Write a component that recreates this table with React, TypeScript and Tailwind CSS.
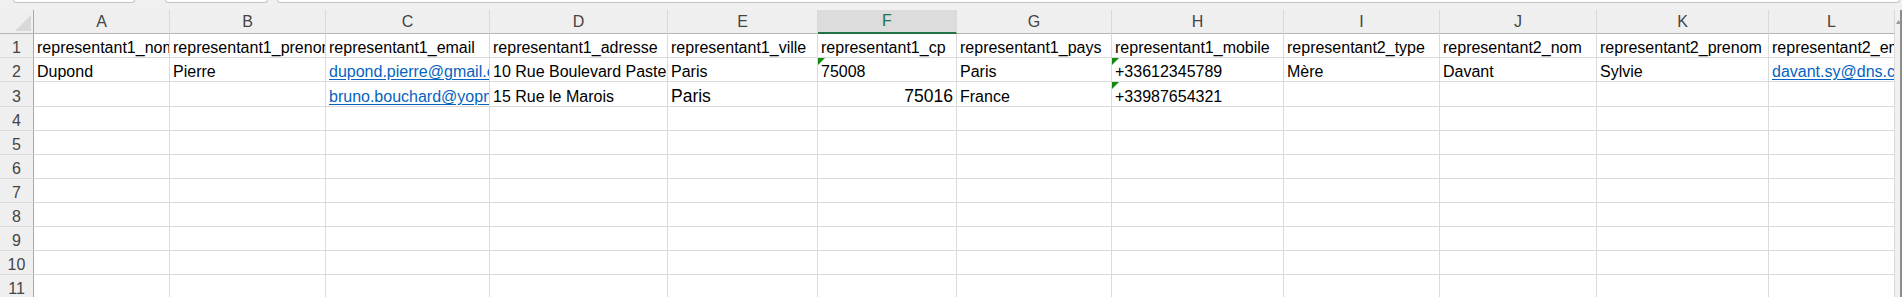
import React from 'react'

type Cell = { v: string; link?: boolean; flag?: boolean; big?: boolean; right?: boolean }

const letters = ['A', 'B', 'C', 'D', 'E', 'F', 'G', 'H', 'I', 'J', 'K', 'L']

const grid =
  'grid grid-cols-[34px_136px_156px_164px_178px_150px_139px_155px_172px_156px_157px_172px_126px]'

const header: Cell[] = [
  'representant1_nom',
  'representant1_prenom',
  'representant1_email',
  'representant1_adresse',
  'representant1_ville',
  'representant1_cp',
  'representant1_pays',
  'representant1_mobile',
  'representant2_type',
  'representant2_nom',
  'representant2_prenom',
  'representant2_email',
].map(v => ({ v }))

const rows: { tall?: boolean; cells: Cell[] }[] = [
  { cells: header },
  {
    cells: [
      { v: 'Dupond' },
      { v: 'Pierre' },
      { v: 'dupond.pierre@gmail.com', link: true },
      { v: '10 Rue Boulevard Pasteur' },
      { v: 'Paris' },
      { v: '75008', flag: true },
      { v: 'Paris' },
      { v: '+33612345789', flag: true },
      { v: 'Mère' },
      { v: 'Davant' },
      { v: 'Sylvie' },
      { v: 'davant.sy@dns.com', link: true },
    ],
  },
  {
    tall: true,
    cells: [
      { v: '' },
      { v: '' },
      { v: 'bruno.bouchard@yopmail.com', link: true },
      { v: '15 Rue le Marois' },
      { v: 'Paris', big: true },
      { v: '75016', big: true, right: true },
      { v: 'France' },
      { v: '+33987654321', flag: true },
      { v: '' },
      { v: '' },
      { v: '' },
      { v: '' },
    ],
  },
]

while (rows.length < 11) rows.push({ cells: letters.map(() => ({ v: '' })) })

function SheetCell({ cell, tall }: { cell: Cell; tall?: boolean }) {
  return (
    <div
      className={`relative flex overflow-hidden whitespace-nowrap border-b border-r border-[#dadada] bg-white px-[3px] items-end ${
        tall ? 'h-[25px]' : 'h-[24px]'
      } ${cell.right ? 'justify-end' : 'justify-start'}`}
    >
      {cell.flag && (
        <span className="absolute left-0 top-0 h-0 w-0 border-t-[7px] border-r-[7px] border-t-[#138a13] border-r-transparent" />
      )}
      <span
        className={`${cell.big ? 'text-[17.5px] leading-[19px]' : 'text-[16px] leading-[18px]'} ${
          cell.link ? 'text-[#0563c1] underline underline-offset-[2px]' : 'text-black'
        }`}
      >
        {cell.v}
      </span>
    </div>
  )
}

export default function App() {
  return (
    <div className="h-[297px] w-[1902px] overflow-hidden bg-[#f0f0f0] font-['Liberation_Sans',Arial,sans-serif]">
      <div className="flex h-[10px] items-start">
        <div className="ml-[13px] h-[3px] w-[122px] rounded-b-[3px] border border-t-0 border-[#c4c4c4] bg-white" />
        <div className="ml-[30px] h-[3px] w-[103px] rounded-b-[3px] border border-t-0 border-[#c4c4c4] bg-white" />
        <div className="ml-[9px] h-[3px] w-[1623px] rounded-b-[3px] border border-t-0 border-[#c4c4c4] bg-white" />
      </div>
      <div className="flex">
        <div className={grid}>
          <div className="relative h-[24px] border-b border-r border-b-[#b5b5b5] border-r-[#a9a9a9] bg-[#efefef]">
            <svg className="absolute left-[15px] top-[5px]" width="16" height="16" viewBox="0 0 16 16">
              <polygon points="16,0 16,16 0,16" fill="#d9d9d9" />
            </svg>
          </div>
          {letters.map(l => (
            <div
              key={l}
              className={`flex h-[24px] items-center justify-center border-r border-r-[#d9d9d9] text-[16px] ${
                l === 'F'
                  ? 'border-b-2 border-b-[#217346] bg-[#dcdcdc] text-[#217346]'
                  : 'border-b border-b-[#b5b5b5] bg-[#efefef] text-[#444]'
              }`}
            >
              {l}
            </div>
          ))}
          {rows.map((row, i) => (
            <React.Fragment key={i}>
              <div
                className={`flex items-end justify-center border-b border-r border-b-[#dadada] border-r-[#a9a9a9] bg-[#efefef] text-[16px] leading-[18px] text-[#444] ${
                  row.tall ? 'h-[25px]' : 'h-[24px]'
                }`}
              >
                {i + 1}
              </div>
              {row.cells.map((c, j) => (
                <SheetCell key={j} cell={c} tall={row.tall} />
              ))}
            </React.Fragment>
          ))}
        </div>
        <div className="relative w-[7px] border-r-2 border-[#8c8c8c] bg-[#f0f0f0]">
          <svg className="absolute left-[1px] top-[10px]" width="5" height="4" viewBox="0 0 5 4">
            <polygon points="2.5,0 5,4 0,4" fill="#9a9a9a" />
          </svg>
        </div>
      </div>
    </div>
  )
}
